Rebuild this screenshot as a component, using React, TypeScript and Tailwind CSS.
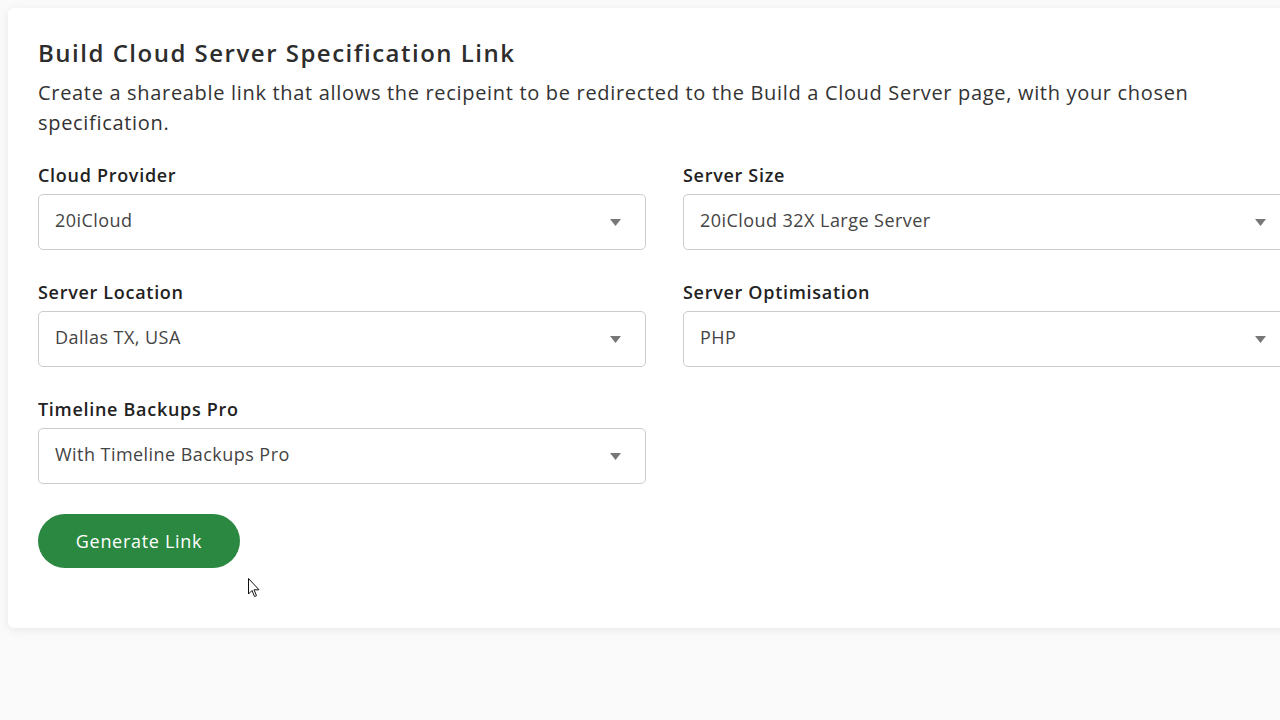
import React from "react";

type Field = { label: string; value: string };

const rows: (Field | null)[][] = [
  [
    { label: "Cloud Provider", value: "20iCloud" },
    { label: "Server Size", value: "20iCloud 32X Large Server" },
  ],
  [
    { label: "Server Location", value: "Dallas TX, USA" },
    { label: "Server Optimisation", value: "PHP" },
  ],
  [{ label: "Timeline Backups Pro", value: "With Timeline Backups Pro" }, null],
];

function SelectField({ label, value }: Field) {
  return (
    <div className="flex flex-col">
      <label className="text-[18px] leading-[22px] font-semibold text-[#222] mb-[8px] tracking-[0.7px]">{label}</label>
      <div className="h-[56px] border border-[#ccc] rounded-[5px] bg-white flex items-center justify-between pl-[16px] pr-[24px]">
        <span className="text-[18px] text-[#444] tracking-[0.45px] pb-[3px]">{value}</span>
        <svg width="11" height="7" viewBox="0 0 11 7">
          <path d="M0 0 H11 L5.5 7 Z" fill="#777" />
        </svg>
      </div>
    </div>
  );
}

export default function App(): React.ReactElement {
  return (
    <div
      className="relative w-[1280px] h-[720px] overflow-hidden bg-[#fafafa] pt-[8px] pl-[8px]"
      style={{ fontFamily: '"Open Sans", "Liberation Sans", sans-serif' }}
    >
      <div className="w-[1313px] bg-white rounded-[6px] shadow-[0_2px_10px_rgba(0,0,0,0.08)] px-[30px] pt-[29px] pb-[60px]">
        <h2 className="text-[24px] leading-[32px] font-semibold text-[#2d2d2d] tracking-[1.5px]">
          Build Cloud Server Specification Link
        </h2>
        <p className="mt-[9px] text-[20px] leading-[30px] text-[#333] w-[1180px] tracking-[0.68px]">
          Create a shareable link that allows the recipeint to be redirected to the Build a Cloud Server page, with your chosen specification.
        </p>
        <div className="mt-[26px] flex flex-col gap-[31px]">
          {rows.map((row, i) => (
            <div key={i} className="grid grid-cols-2 gap-[37px]">
              {row.map((f, j) => (f ? <SelectField key={j} {...f} /> : <div key={j} />))}
            </div>
          ))}
        </div>
        <button className="mt-[30px] w-[202px] h-[54px] rounded-full bg-[#2a8841] text-white text-[18px] font-medium tracking-[0.7px]">
          Generate Link
        </button>
      </div>
      {/* mouse pointer */}
      <svg className="absolute left-[248px] top-[578px]" width="13" height="20" viewBox="0 0 13 20">
        <path d="M0.5 0.5 V16 L4 12.5 L6.5 18.5 L8.5 17.7 L6 11.8 H11 Z" fill="white" stroke="#111" strokeWidth="1" />
      </svg>
    </div>
  );
}
